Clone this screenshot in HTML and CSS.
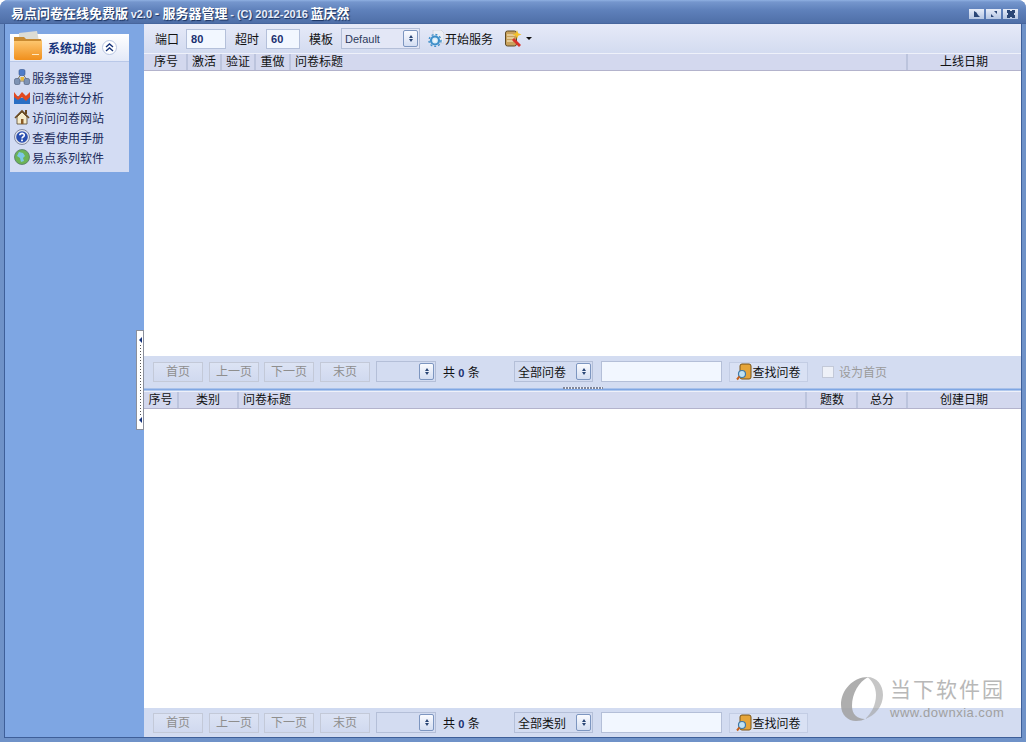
FILE: index.html
```html
<!DOCTYPE html>
<html lang="zh-CN">
  <head>
    <meta charset="UTF-8" />
    <title>易点问卷在线免费版</title>
    <link rel="stylesheet" href="styles.css">
  </head>
  <body>
    <div class="window">
      <div class="titlebar">
        <div class="title">易点问卷在线免费版 <span class="ver">v2.0</span> - 服务器管理 <span class="ver">- (C) 2012-2016</span> 蓝庆然</div>
        <div class="winbtns">
          <div class="winbtn"><svg width="8" height="8" viewBox="0 0 8 8"><path d="M1 1v6h6L5 5 3.500 2.500z" fill="#2a4676"/></svg></div>
          <div class="winbtn"><svg width="8" height="8" viewBox="0 0 8 8"><path d="M1 7V4l3 3zM7 1v3L4 1z" fill="#2a4676"/></svg></div>
          <div class="winbtn"><svg width="8" height="8" viewBox="0 0 8 8"><path d="M0 0h3v1h2V0h3v3H7v2h1v3H5V7H3v1H0V5h1V3H0z" fill="#2a4676"/></svg></div>
        </div>
      </div>

      <div class="content">
        <div class="sidebar">
          <div class="panel">
            <div class="panel-head">
              <svg class="folder" width="30" height="30" viewBox="0 0 30 30">
                <defs>
                  <linearGradient id="fold" x1="0" y1="0" x2="0" y2="1">
                    <stop offset="0" stop-color="#fdc66e"/>
                    <stop offset="1" stop-color="#f08f1c"/>
                  </linearGradient>
                </defs>
                <path d="M6 2l18-2 2 10H6z" fill="#dcdcd4"/>
                <path d="M1 6h10l2 2h15l1 3H1z" fill="#c98a30"/>
                <path d="M1 10h28v17a2 2 0 0 1-2 2H3a2 2 0 0 1-2-2z" fill="url(#fold)"/>
                <path d="M19 23h7v1h-7z" fill="#ffe8c0"/>
              </svg>
              <span class="panel-title">系统功能</span>
              <span class="collapse"><svg width="9" height="9" viewBox="0 0 9 9"><path d="M1 4l3.500-3L8 4M1 8l3.500-3L8 8" fill="none" stroke="#16337a" stroke-width="1.400"/></svg></span>
            </div>
            <div class="panel-body">
              <div class="navitem">
                <svg width="16" height="16" viewBox="0 0 16 16">
                  <path d="M8 4L3 11M8 4l5 7M3 12h10" stroke="#8a7a50" fill="none"/>
                  <rect x="5" y="0.500" width="6" height="6" rx="1.500" fill="#4d7cc9" stroke="#35548c" stroke-width=".6"/>
                  <rect x="0.500" y="9.500" width="5.500" height="6" rx="1.500" fill="#7e93b4" stroke="#4b5a78" stroke-width=".6"/>
                  <rect x="10" y="9.500" width="5.500" height="6" rx="1.500" fill="#7e93b4" stroke="#4b5a78" stroke-width=".6"/>
                  <rect x="6.500" y="8" width="3.500" height="3.500" fill="#e7b93c"/>
                </svg>
                <span>服务器管理</span>
              </div>
              <div class="navitem">
                <svg width="16" height="16" viewBox="0 0 16 16">
                  <path d="M0 15V8l4-1 4 2 4-2 4-3v11z" fill="#2a6fc4"/>
                  <path d="M0 3l4 5 4-5 4 4 4-4v5l-4 4-4-4-4 3-4-3z" fill="#e2491f"/>
                </svg>
                <span>问卷统计分析</span>
              </div>
              <div class="navitem">
                <svg width="16" height="16" viewBox="0 0 16 16">
                  <path d="M3 8l5-5 5 5v7H3z" fill="#f6eccb" stroke="#55452a" stroke-width=".8"/>
                  <path d="M1 9l7-7 7 7" fill="none" stroke="#6b4a22" stroke-width="1.600"/>
                  <path d="M11 1h2v4h-2z" fill="#6b4a22"/>
                  <path d="M7 10h2.500v5H7z" fill="#8a5a25"/>
                </svg>
                <span>访问问卷网站</span>
              </div>
              <div class="navitem">
                <svg width="16" height="16" viewBox="0 0 16 16">
                  <circle cx="8" cy="8" r="7.500" fill="#e3e6ee" stroke="#67708c" stroke-width=".8"/>
                  <circle cx="8" cy="8" r="5.800" fill="#2a4fb0"/>
                  <path d="M5.800 6.300C6 3.800 10.300 3.800 10.300 6.200 10.300 7.800 8 7.700 8 9.500" fill="none" stroke="#fff" stroke-width="1.600"/>
                  <path d="M7.100 10.600h1.800v1.700H7.100z" fill="#fff"/>
                </svg>
                <span>查看使用手册</span>
              </div>
              <div class="navitem">
                <svg width="16" height="16" viewBox="0 0 16 16">
                  <circle cx="8" cy="8" r="7.500" fill="#6cb356" stroke="#55786a" stroke-width=".8"/>
                  <path d="M5 3l4 1 2 3-2 2 1 3-3 1-1-4-3-2z" fill="#7dc6e6"/>
                </svg>
                <span>易点系列软件</span>
              </div>
            </div>
          </div>
          <div class="handle">
            <span class="tri"></span>
            <span class="dots"></span>
            <span class="tri"></span>
          </div>
        </div>

        <div class="main">
          <div class="toolbar">
            <span class="lbl">端口</span>
            <span class="field field-port">80</span>
            <span class="lbl lbl-gap">超时</span>
            <span class="field field-time">60</span>
            <span class="lbl lbl-gap">模板</span>
            <span class="combo combo-tpl"><span class="combo-text latin">Default</span><span class="spin"></span></span>
            <span class="tool-start">
              <svg width="16" height="17" viewBox="0 0 16 17">
                <path d="M5 0h8l3 3v10H5z" fill="#eceef4" stroke="#c4c8d4" stroke-width=".6"/>
                <circle cx="7" cy="10.500" r="4" fill="#d8ecf8" stroke="#3d8fc9" stroke-width="2.200"/>
                <circle cx="7" cy="10.500" r="6" fill="none" stroke="#3d8fc9" stroke-width="1.400" stroke-dasharray="2 2"/>
                <circle cx="7" cy="10.500" r="1.600" fill="#eef6fb"/>
              </svg>
              开始服务
            </span>
            <span class="tool-menu">
              <svg width="19" height="19" viewBox="0 0 19 19">
                <rect x="1.500" y="2" width="11" height="15" rx="2" fill="#c9a25c" stroke="#5d4a26"/>
                <path d="M3 6h8M3 9h7M3 12h6" stroke="#fff3d0"/>
                <path d="M10 9l7 7-2 2-7-7z" fill="#d8322a"/>
                <path d="M13 1l1.200 3.300 3.300 1.200-3.300 1.200L13 10l-1.200-3.300-3.300-1.200 3.300-1.200z" fill="#f4c22b"/>
              </svg>
              <span class="caret"></span>
            </span>
          </div>

          <div class="thead">
            <span class="th col-44">序号</span>
            <span class="th col-34">激活</span>
            <span class="th col-34">验证</span>
            <span class="th col-35">重做</span>
            <span class="th th-left grow">问卷标题</span>
            <span class="th th-last">上线日期</span>
          </div>
          <div class="tbody tbody-top"></div>

          <div class="pager pager-top">
            <span class="btn">首页</span>
            <span class="btn btn-5">上一页</span>
            <span class="btn btn-6">下一页</span>
            <span class="btn btn-4b">末页</span>
            <span class="combo combo-page"><span class="combo-text"></span><span class="spin"></span></span>
            <span class="count">共 <b>0</b> 条</span>
            <span class="combo combo-kind"><span class="combo-text">全部问卷</span><span class="spin"></span></span>
            <span class="search"></span>
            <span class="btn-find">
              <svg width="16" height="18" viewBox="0 0 16 18">
                <rect x="4" y="1" width="11" height="15" rx="2" fill="#e5a53a" stroke="#7a5518"/>
                <circle cx="6" cy="11" r="3.500" fill="#bfe2f4" stroke="#3d78a8" stroke-width="1.200"/>
                <path d="M3.500 13.500L1 16.500" stroke="#c6601c" stroke-width="2"/>
              </svg>
              查找问卷
            </span>
            <span class="check"></span>
            <span class="check-label">设为首页</span>
          </div>

          <div class="splitter"><span class="grip"></span></div>

          <div class="thead">
            <span class="th col-35">序号</span>
            <span class="th col-60">类别</span>
            <span class="th th-left grow">问卷标题</span>
            <span class="th col-51">题数</span>
            <span class="th col-50">总分</span>
            <span class="th th-last">创建日期</span>
          </div>
          <div class="tbody"></div>

          <div class="pager pager-bottom">
            <span class="btn">首页</span>
            <span class="btn btn-5">上一页</span>
            <span class="btn btn-6">下一页</span>
            <span class="btn btn-4b">末页</span>
            <span class="combo combo-page"><span class="combo-text"></span><span class="spin"></span></span>
            <span class="count">共 <b>0</b> 条</span>
            <span class="combo combo-kind"><span class="combo-text">全部类别</span><span class="spin"></span></span>
            <span class="search"></span>
            <span class="btn-find">
              <svg width="16" height="18" viewBox="0 0 16 18">
                <rect x="4" y="1" width="11" height="15" rx="2" fill="#e5a53a" stroke="#7a5518"/>
                <circle cx="6" cy="11" r="3.500" fill="#bfe2f4" stroke="#3d78a8" stroke-width="1.200"/>
                <path d="M3.500 13.500L1 16.500" stroke="#c6601c" stroke-width="2"/>
              </svg>
              查找问卷
            </span>
          </div>
        </div>
      </div>

      <div class="watermark">
        <svg width="44" height="44" viewBox="0 0 44 44">
          <path d="M28 0C13 0 1 13 1 28c0 10 7 16 15 16 4 0 7-1 9-2-8 0-13-5-13-13C12 16 19 5 28 0z" fill="#a0a0a0" opacity=".85"/>
          <path d="M27 0c10 0 16 8 16 18 0 11-8 21-18 24 6-5 11-14 11-24 0-8-4-15-9-18z" fill="#a0a0a0" opacity=".6"/>
        </svg>
        <div class="wm-text">
          <div class="wm-cn">当下软件园</div>
          <div class="wm-url">www.downxia.com</div>
        </div>
      </div>
    </div>
  </body>
</html>
```

FILE: styles.css
```css
html, body {
  margin: 0;
  padding: 0;
}
body {
  width: 1026px;
  height: 742px;
  overflow: hidden;
  font-family: "Liberation Sans", "Noto Sans CJK SC", sans-serif;
  font-size: 12px;
  color: #111;
}
.window {
  position: relative;
  width: 1026px;
  height: 742px;
  display: flex;
  flex-direction: column;
  box-sizing: border-box;
  padding-bottom: 4px;
  background: #6f92c8;
  border-radius: 8px 8px 0 0;
}
.titlebar {
  height: 24px;
  flex: none;
  display: flex;
  align-items: center;
  justify-content: space-between;
  padding: 0 8px 0 11px;
  background: linear-gradient(#8fb0e2 0, #7596cd 2px, #5f81bb 10px, #4f6fa8 23px, #3f5c92 24px);
  border-radius: 8px 8px 0 0;
}
.title {
  color: #fff;
  font-size: 13px;
  font-weight: bold;
  text-shadow: 1px 1px 1px #17305e;
  white-space: nowrap;
}
.ver {
  font-size: 11px;
  color: #e8eefa;
  margin-right: -1px;
  margin-left: -1px;
}
.winbtns {
  display: flex;
  gap: 2px;
  margin-top: 3px;
}
.winbtn {
  width: 15px;
  height: 10px;
  display: flex;
  align-items: center;
  justify-content: center;
  background: linear-gradient(#e6ecf8, #b5c6e3);
}
.content {
  flex: 1;
  display: flex;
  min-height: 0;
  margin: 0 4px;
  border: 1px solid #3e5f99;
  border-top: 0;
}
.sidebar {
  position: relative;
  width: 139px;
  flex: none;
  background: #7ea6e3;
  padding: 10px 15px 0 5px;
  box-sizing: border-box;
}
.panel {
  width: 119px;
  height: 138px;
  background: #d3dcf3;
}
.panel-head {
  position: relative;
  height: 28px;
  display: flex;
  align-items: center;
  background: linear-gradient(#fff, #e3e9f8);
  border-bottom: 1px solid #b9c8e8;
  box-sizing: border-box;
}
.folder {
  position: absolute;
  left: 3px;
  top: -3px;
}
.panel-title {
  margin-left: 38px;
  font-size: 12px;
  font-weight: bold;
  color: #16337a;
}
.collapse {
  width: 13px;
  height: 13px;
  margin-left: 6px;
  border-radius: 50%;
  background: #fff;
  border: 1px solid #b6c4e2;
  display: flex;
  align-items: center;
  justify-content: center;
}
.panel-body {
  padding: 5px 0 0 4px;
}
.navitem {
  height: 20px;
  display: flex;
  align-items: center;
  gap: 2px;
  color: #1c2c5c;
  white-space: nowrap;
}
.handle {
  position: absolute;
  right: 0;
  top: 306px;
  width: 8px;
  height: 100px;
  box-sizing: border-box;
  background: #fff;
  border: 1px solid #8a8f9c;
  display: flex;
  flex-direction: column;
  align-items: center;
  justify-content: space-between;
  padding: 6px 0;
}
.tri {
  width: 0;
  height: 0;
  border-top: 3px solid transparent;
  border-bottom: 3px solid transparent;
  border-right: 3px solid #16337a;
}
.dots {
  flex: 1;
  width: 1px;
  margin: 2px 0;
  background: repeating-linear-gradient(#555 0 1px, transparent 1px 3px);
}
.main {
  flex: 1;
  min-width: 0;
  display: flex;
  flex-direction: column;
  background: #fff;
}
.toolbar {
  height: 29px;
  flex: none;
  display: flex;
  align-items: center;
  padding-left: 11px;
  background: linear-gradient(#e6eaf8, #d3dbf0);
}
.lbl {
  white-space: nowrap;
}
.lbl-gap {
  margin-left: 9px;
}
.field {
  height: 20px;
  line-height: 18px;
  box-sizing: border-box;
  margin-left: 7px;
  padding-left: 4px;
  background: #f2f7ff;
  border: 1px solid #b4c0da;
  color: #1a2f70;
  font-size: 11px;
  font-weight: bold;
}
.field-port { width: 40px; }
.field-time { width: 34px; }
.combo {
  display: flex;
  align-items: center;
  justify-content: space-between;
  box-sizing: border-box;
  height: 21px;
  border: 1px solid #b4bfd8;
  background: #d3dcf1;
  padding: 0 1px 0 3px;
}
.combo-tpl {
  width: 79px;
  margin-left: 8px;
  background: #e3e7f6;
}
.combo-text {
  white-space: nowrap;
}
.latin {
  font-size: 11px;
  color: #2c3a5c;
}
.spin {
  width: 15px;
  height: 17px;
  flex: none;
  box-sizing: border-box;
  border: 1px solid #7d96c0;
  border-radius: 2px;
  background: linear-gradient(#fafbff, #d4def2);
  display: flex;
  flex-direction: column;
  align-items: center;
  justify-content: center;
  gap: 1px;
}
.spin::before, .spin::after {
  content: "";
  width: 0;
  height: 0;
  border-left: 2.500px solid transparent;
  border-right: 2.500px solid transparent;
}
.spin::before { border-bottom: 3px solid #2a4676; }
.spin::after { border-top: 3px solid #2a4676; }
.tool-start {
  display: flex;
  align-items: center;
  gap: 1px;
  margin-left: 8px;
  white-space: nowrap;
}
.tool-menu {
  display: flex;
  align-items: center;
  gap: 3px;
  margin-left: 11px;
}
.caret {
  width: 0;
  height: 0;
  border-left: 3px solid transparent;
  border-right: 3px solid transparent;
  border-top: 3px solid #111;
}
.thead {
  height: 18px;
  flex: none;
  display: flex;
  background: #d3d8ee;
  border-top: 1px solid #eef1fa;
  border-bottom: 1px solid #b3b3cc;
  box-sizing: border-box;
}
.th {
  flex: none;
  box-sizing: border-box;
  text-align: center;
  line-height: 16px;
  border-right: 2px solid #bcc4dd;
  white-space: nowrap;
}
.col-34 { width: 34px; }
.col-35 { width: 35px; }
.col-44 { width: 44px; padding-left: 2px; }
.col-50 { width: 50px; }
.col-51 { width: 51px; padding-left: 1px; }
.col-60 { width: 60px; }
.th-left {
  text-align: left;
  padding-left: 4px;
}
.th-last {
  width: 113px;
  padding-right: 1px;
  border-right: 0;
}
.grow {
  flex: 1;
}
.tbody {
  flex: 1;
  background: #fff;
}
.tbody-top {
  flex: none;
  height: 285px;
}
.pager {
  flex: none;
  display: flex;
  align-items: center;
  padding-left: 9px;
  background: #d3dcf1;
  box-sizing: border-box;
}
.pager-top {
  height: 31px;
}
.pager-bottom {
  height: 29px;
}
.btn {
  height: 20px;
  line-height: 18px;
  box-sizing: border-box;
  width: 50px;
  text-align: center;
  color: #8e8e8e;
  background: linear-gradient(#dce3f4, #d0d9ef);
  border: 1px solid #c3c9d8;
  white-space: nowrap;
}
.btn-5 { margin-left: 6px; }
.btn-6 { margin-left: 5px; }
.btn-4b { margin-left: 6px; }
.combo-page {
  width: 60px;
  margin-left: 6px;
}
.count {
  width: 71px;
  margin-left: 7px;
  white-space: nowrap;
}
.count b {
  font-size: 11px;
  color: #1a2f70;
}
.combo-kind {
  width: 79px;
}
.search {
  width: 121px;
  height: 21px;
  box-sizing: border-box;
  margin-left: 8px;
  background: #f2f7ff;
  border: 1px solid #b4bfd8;
}
.btn-find {
  display: flex;
  align-items: center;
  justify-content: center;
  width: 79px;
  height: 20px;
  box-sizing: border-box;
  margin-left: 7px;
  background: #d9e1f4;
  border: 1px solid #c3cde4;
  white-space: nowrap;
}
.check {
  width: 12px;
  height: 12px;
  box-sizing: border-box;
  margin-left: 14px;
  background: #eef1f8;
  border: 1px solid #c3c9d8;
}
.check-label {
  margin-left: 5px;
  color: #9a9a9a;
}
.splitter {
  height: 4px;
  flex: none;
  background: linear-gradient(#d3dcf1 0, #d3dcf1 1px, #7ea6e3 2px, #7ea6e3 3px, #e4ebf8 4px);
  display: flex;
  justify-content: center;
}
.grip {
  width: 40px;
  height: 2px;
  background: repeating-linear-gradient(90deg, #80869a 0 2px, #eef0f6 2px 3px);
}
.watermark {
  position: absolute;
  left: 840px;
  top: 677px;
  display: flex;
  gap: 6px;
  pointer-events: none;
}
.wm-cn {
  font-size: 21px;
  line-height: 26px;
  letter-spacing: 2px;
  color: #b8b8b8;
}
.wm-url {
  font-size: 13px;
  line-height: 16px;
  letter-spacing: .5px;
  color: #a0a0a0;
  margin-top: 2px;
}
```
